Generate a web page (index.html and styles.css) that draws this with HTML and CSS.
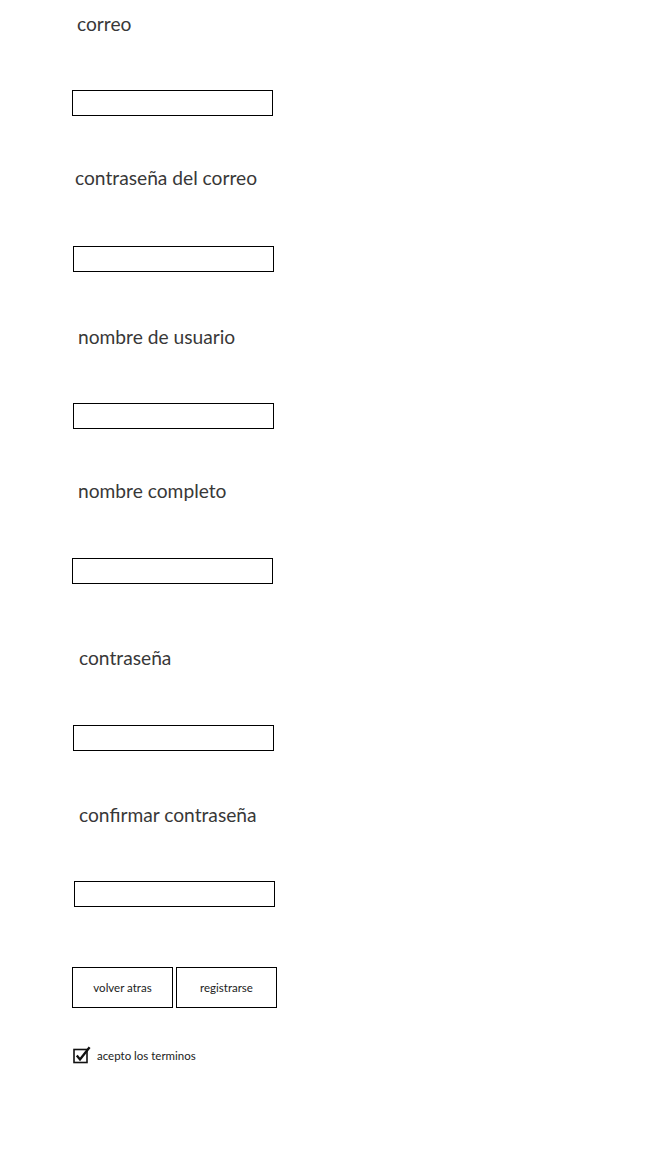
FILE: index.html
```html
<!DOCTYPE html>
<html lang="es">
<head>
<meta charset="utf-8">
<title>Registro</title>
<link rel="stylesheet" href="styles.css">
</head>
<body>
<form class="form">
  <div class="field f1">
    <label class="label">correo</label>
    <input class="input" type="text">
  </div>
  <div class="field f2">
    <label class="label">contraseña del correo</label>
    <input class="input" type="password">
  </div>
  <div class="field f3">
    <label class="label">nombre de usuario</label>
    <input class="input" type="text">
  </div>
  <div class="field f4">
    <label class="label">nombre completo</label>
    <input class="input" type="text">
  </div>
  <div class="field f5">
    <label class="label">contraseña</label>
    <input class="input" type="password">
  </div>
  <div class="field f6">
    <label class="label">confirmar contraseña</label>
    <input class="input" type="password">
  </div>
  <div class="buttons">
    <button type="button" class="btn">volver atras</button>
    <button type="button" class="btn">registrarse</button>
  </div>
  <label class="terms">
    <span class="check">
      <svg width="19" height="18" viewBox="0 0 19 18">
        <rect x="1" y="3.5" width="13" height="13" fill="none" stroke="#111" stroke-width="1.6"/>
        <path d="M3.8 9.6 L7 13.4 L16.6 1.2" fill="none" stroke="#111" stroke-width="2.4" stroke-linejoin="miter" stroke-linecap="butt"/>
      </svg>
    </span>
    <span class="terms-text">acepto los terminos</span>
  </label>
</form>
</body>
</html>
```

FILE: styles.css
```css
html, body {
  margin: 0;
  padding: 0;
  background: #fff;
}

body {
  font-family: "Lato", "Noto Sans", sans-serif;
  color: #333;
}

.form {
  display: flex;
  flex-direction: column;
  align-items: flex-start;
  padding-left: 72px;
}

.field {
  display: flex;
  flex-direction: column;
  align-items: flex-start;
}

.label {
  font-size: 19.2px;
  line-height: 24px;
  height: 24px;
  color: #383838;
  white-space: nowrap;
}

.input {
  box-sizing: border-box;
  width: 201px;
  height: 26px;
  margin: 0;
  border: 1px solid #000;
  border-radius: 0;
  padding: 0 4px;
  background: #fff;
  outline: none;
}

.f1 { margin-top: 12px; }
.f1 .label { margin-left: 5px; }
.f1 .input { margin-top: 54px; }

.f2 { margin-top: 50px; }
.f2 .label { margin-left: 3px; }
.f2 .input { margin-top: 56px; margin-left: 1px; }

.f3 { margin-top: 53px; }
.f3 .label { margin-left: 6px; }
.f3 .input { margin-top: 54px; margin-left: 1px; }

.f4 { margin-top: 50px; }
.f4 .label { margin-left: 6px; }
.f4 .input { margin-top: 55px; }

.f5 { margin-top: 62px; }
.f5 .label { margin-left: 7px; }
.f5 .input { margin-top: 55px; margin-left: 1px; }

.f6 { margin-top: 52px; }
.f6 .label { margin-left: 7px; }
.f6 .input { margin-top: 54px; margin-left: 2px; }

.buttons {
  display: flex;
  gap: 3px;
  margin-top: 60px;
}

.btn {
  box-sizing: border-box;
  width: 101px;
  height: 41px;
  margin: 0;
  padding: 0;
  border: 1px solid #000;
  border-radius: 0;
  background: #fff;
  font-family: "Lato", "Noto Sans", sans-serif;
  font-size: 11.5px;
  color: #222;
}

.terms {
  display: flex;
  align-items: center;
  margin-top: 38px;
  margin-left: 1px;
}

.check {
  display: block;
  width: 19px;
  height: 18px;
}

.check svg {
  display: block;
}

.terms-text {
  margin-left: 5px;
  font-size: 11.5px;
  color: #222;
}
```
